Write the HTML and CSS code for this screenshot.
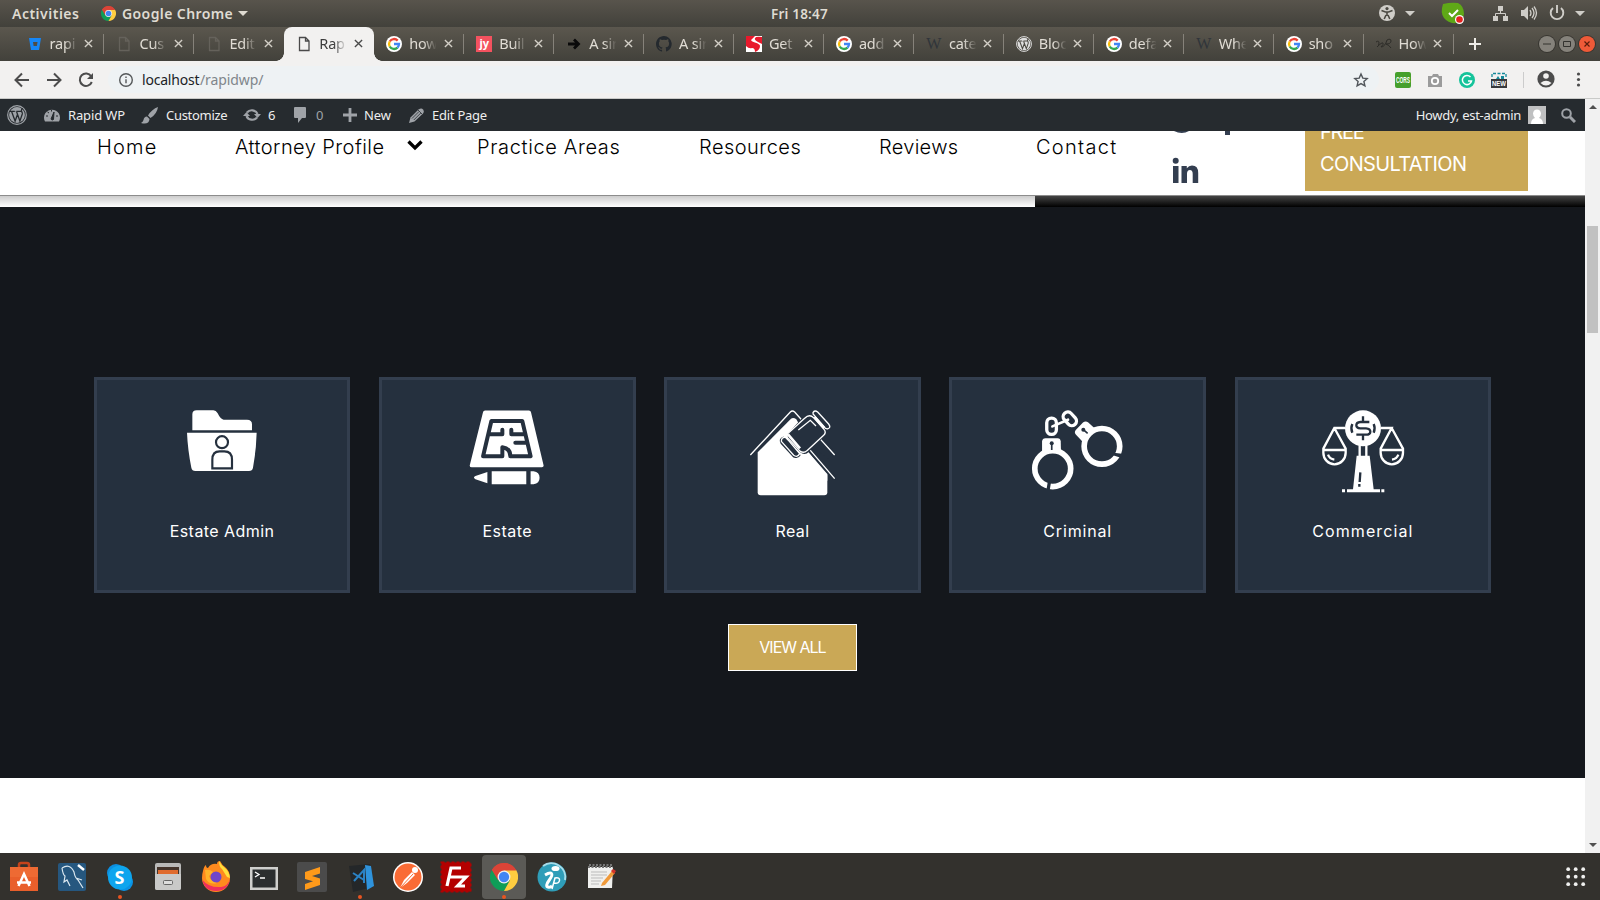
FILE: index.html
```html
<!DOCTYPE html>
<html lang="en">
<head>
<meta charset="utf-8">
<title>Rapid WP</title>
<link rel="stylesheet" href="styles.css">
</head>
<body>
<svg class="defs" width="0" height="0">
  <symbol id="google" viewBox="0 0 16 16"><circle cx="8" cy="8" r="8" fill="#fff"/><g fill="none" stroke-width="2.300"><path d="M11.700 4.600A5 5 0 0 0 3.700 5.500" stroke="#ea4335"/><path d="M3.700 5.500a5 5 0 0 0 0 5" stroke="#fbbc05"/><path d="M3.700 10.500a5 5 0 0 0 7.800 1.100" stroke="#34a853"/><path d="M11.500 11.600A5 5 0 0 0 13 8H8" stroke="#4285f4"/></g></symbol>
  <symbol id="page" viewBox="0 0 16 16"><path d="M3.500 1.500h6l3.500 3.500v9.500H3.500zM9.500 1.500V5H13" fill="none" stroke="currentColor" stroke-width="1.300"/></symbol>
  <symbol id="wordpress" viewBox="0 0 20 20"><circle cx="10" cy="10" r="9.300" fill="none" stroke="currentColor" stroke-width="1.200"/><circle cx="10" cy="10" r="7.900" fill="currentColor"/><path d="M2.500 6.300h5.200M9.300 6.300h5.200M4.600 6.500l3.500 9.500 2.300-6.300M8.300 6.500l-.1.2M9.500 6.500l3.400 9.500 2.400-7c.4-1.400-.9-2.400-.9-3.600 0-1.100.9-1.700 1.600-1.700" fill="none" stroke="var(--wp-ink)" stroke-width="1.300"/></symbol>
  <symbol id="chrome" viewBox="0 0 48 48"><path d="M24 24 3.200 12A24 24 0 0 1 44.800 12z" fill="#db4437"/><path d="M24 24 3.200 12A24 24 0 0 0 24 48l10-18z" fill="#0f9d58"/><path d="M24 24l10 6-10 18A24 24 0 0 0 44.800 12H24z" fill="#ffcd40"/><path d="M3.200 12 14 30l10-17h20.800A24 24 0 0 0 3.200 12z" fill="#db4437"/><circle cx="24" cy="24" r="11" fill="#f1f1f1"/><circle cx="24" cy="24" r="8.800" fill="#4285f4"/></symbol>
  <symbol id="close" viewBox="0 0 10 10"><path d="M1 1l8 8M9 1l-8 8" stroke="currentColor" stroke-width="1.500"/></symbol>
</svg>

<header class="topbar">
  <span class="activities">Activities</span>
  <svg class="i15"><use href="#chrome"/></svg>
  <span class="appname">Google Chrome</span>
  <i class="tri"></i>
  <span class="clock">Fri 18:47</span>
  <svg class="tray" width="220" height="27" viewBox="1375 0 220 27" fill="#cfcdc8">
    <circle cx="1387" cy="13" r="8"/><g stroke="#4b4942" stroke-width="1.600" fill="none"><path d="M1381.500 10.500l4 1.500h3l4-1.500M1387 12v4M1386 15l-1.800 4M1388 15l1.800 4"/></g><circle cx="1387" cy="8.600" r="1.600" fill="#4b4942"/>
    <path d="M1405 11h10l-5 5zM1575 11h10l-5 5z"/>
    <path d="M1443 4q-3 9 1 14 5 6 12 5 7-2 8-9 0-8-6-11-7-1-15 1z" fill="#5fa817"/><path d="M1449 13l3 3 6-6" stroke="#fff" stroke-width="2" fill="none"/><circle cx="1459.500" cy="19.500" r="4.500" fill="#fff"/><circle cx="1459.500" cy="19.500" r="3.300" fill="#e52320"/>
    <path d="M1498 6h5v5h-5zM1493 16h5v5h-5zM1503 16h5v5h-5z"/><path d="M1500.500 10v3.500M1495.500 17v-3.500h10v3.500" stroke="#cfcdc8" fill="none"/>
    <path d="M1521 10h3l4-4v14l-4-4h-3z"/><path d="M1530 10q2 3 0 6M1532 8q4 5 0 10M1534 6.500q5 6.500 0 13" stroke="#cfcdc8" stroke-width="1.300" fill="none"/>
    <path d="M1553 8a6.300 6.300 0 1 0 8 0M1557 5v8" stroke="#cfcdc8" stroke-width="1.900" fill="none"/>
  </svg>
</header>

<nav class="tabs">
  <div class="tab"><svg viewBox="0 0 16 16"><path d="M2 2h12l-2 12H4z" fill="#1687f8"/><path d="M6 6h4.500l-.6 4H6.600z" fill="#4f4d46"/></svg><span>rapi</span><svg class="x"><use href="#close"/></svg></div>
  <div class="tab dim"><svg><use href="#page"/></svg><span>Cus</span><svg class="x"><use href="#close"/></svg></div>
  <div class="tab dim"><svg><use href="#page"/></svg><span>Edit</span><svg class="x"><use href="#close"/></svg></div>
  <div class="tab active"><svg><use href="#page"/></svg><span>Rap</span><svg class="x"><use href="#close"/></svg></div>
  <div class="tab"><svg><use href="#google"/></svg><span>how</span><svg class="x"><use href="#close"/></svg></div>
  <div class="tab"><b class="jy">jy</b><span>Buil</span><svg class="x"><use href="#close"/></svg></div>
  <div class="tab"><svg viewBox="0 0 16 16"><path d="M2 8h10M8 3.500L12.500 8 8 12.500" fill="none" stroke="#0a0a0a" stroke-width="2.800"/></svg><span>A sir</span><svg class="x"><use href="#close"/></svg></div>
  <div class="tab"><svg viewBox="0 0 16 16"><path fill="#24292e" d="M8 0C3.580 0 0 3.580 0 8c0 3.540 2.290 6.530 5.470 7.590.4.070.55-.17.55-.38v-1.490c-2.230.48-2.690-1.070-2.690-1.070-.36-.92-.89-1.170-.89-1.170-.73-.5.050-.49.050-.49.810.06 1.230.83 1.230.83.71 1.230 1.870.87 2.330.66.070-.52.28-.87.500-1.070-1.780-.2-3.640-.89-3.640-3.950 0-.87.310-1.590.82-2.150-.08-.2-.36-1.020.08-2.120 0 0 .67-.21 2.200.82a7.600 7.600 0 0 1 4 0c1.530-1.040 2.200-.82 2.200-.82.44 1.100.16 1.920.08 2.120.51.56.82 1.270.82 2.150 0 3.070-1.870 3.750-3.650 3.950.29.250.54.73.54 1.480v2.200c0 .21.150.46.550.38A8 8 0 0 0 8 0z"/></svg><span>A sir</span><svg class="x"><use href="#close"/></svg></div>
  <div class="tab"><svg viewBox="0 0 16 16"><path d="M0 0h16v16H0z" fill="#e8192c"/><path d="M16 0v16H9q5-2 5-6 0-2-5-3.500T5.500 3.500 9 0zM0 10q3 3 6 2 3 0 3 4H0z" fill="#fff"/><path d="M16 1q-6-1-7 1t3 4l4 2z" fill="#e8192c"/></svg><span>Get</span><svg class="x"><use href="#close"/></svg></div>
  <div class="tab"><svg><use href="#google"/></svg><span>add</span><svg class="x"><use href="#close"/></svg></div>
  <div class="tab"><b class="w">W</b><span>cate</span><svg class="x"><use href="#close"/></svg></div>
  <div class="tab wpt"><svg><use href="#wordpress"/></svg><span>Bloc</span><svg class="x"><use href="#close"/></svg></div>
  <div class="tab"><svg><use href="#google"/></svg><span>defa</span><svg class="x"><use href="#close"/></svg></div>
  <div class="tab"><b class="w">W</b><span>Whe</span><svg class="x"><use href="#close"/></svg></div>
  <div class="tab"><svg><use href="#google"/></svg><span>sho</span><svg class="x"><use href="#close"/></svg></div>
  <div class="tab"><svg viewBox="0 0 16 16"><path d="M0 6q3-2 3 1t-2 4q5-5 6-4t-2 4q4 0 6-7 4-2 4 1t-5 3q3 1 5 4" fill="none" stroke="#2d2c28"/></svg><span>How</span><svg class="x"><use href="#close"/></svg></div>
  <svg class="plus" viewBox="0 0 12 12"><path d="M6 0v12M0 6h12" stroke="#eeece7" stroke-width="2"/></svg>
  <div class="winbtns"><svg viewBox="0 0 16 16"><path d="M4 8h8" stroke="#33322e"/></svg><svg viewBox="0 0 16 16"><path d="M4.500 5.500h7v5h-7z" fill="none" stroke="#33322e"/></svg><svg class="red" viewBox="0 0 16 16"><path d="M5.500 5.500l5 5M10.500 5.500l-5 5" stroke="#5a1d0c" stroke-width="1.200"/></svg></div>
</nav>

<div class="toolbar">
  <svg class="arrows" width="94" height="20" viewBox="10 69 94 20" fill="none" stroke="#4c4c4c" stroke-width="2"><path d="M29 79H16M22 72.500L15.500 79l6.500 6.500M47 79h13M54 72.500l6.500 6.500-6.500 6.500M91.200 75.200a6.200 6.200 0 1 0 .6 5.800"/><path d="M93 72v6h-6z" fill="#4c4c4c" stroke="none"/></svg>
  <div class="address">
    <svg width="16" height="16" viewBox="0 0 16 16" fill="none" stroke="#55585a" stroke-width="1.400"><circle cx="8" cy="8" r="6.300"/><path d="M8 7.200v4M8 4.500v1.500"/></svg>
    <span class="host">localhost</span><span class="path">/rapidwp/</span>
    <svg class="star" width="16" height="16" viewBox="0 0 16 16"><path d="M8 2l1.800 4.100 4.400.4-3.300 3 1 4.400L8 11.600l-3.900 2.300 1-4.400-3.300-3 4.400-.4z" fill="none" stroke="#50555a" stroke-width="1.400"/></svg>
  </div>
  <svg class="ext" width="200" height="26" viewBox="1390 67 200 26">
    <rect x="1395" y="72" width="16" height="16" rx="2" fill="#46a02c"/><text x="1396" y="83" textLength="14" lengthAdjust="spacingAndGlyphs" class="cors">CORS</text>
    <path d="M1428 76h4l1-2h5l1 2h3v11h-14z" fill="#9b9b9b"/><circle cx="1435" cy="81" r="3.200" fill="none" stroke="#fff" stroke-width="1.800"/>
    <circle cx="1467" cy="80" r="8" fill="#15c39a"/><path d="M1470.500 77a4.600 4.600 0 1 0 1 4h-3.500" fill="none" stroke="#fff" stroke-width="1.500"/>
    <path d="M1492 77v-3.500h14V77" fill="none" stroke="#14899a" stroke-width="1.300" stroke-dasharray="3 1.500"/><path d="M1496 79l2-3 2 3zM1501 76h3v3h-3z" fill="#14899a"/><rect x="1491" y="79" width="16" height="9" fill="#37393d"/><text x="1492" y="86.200" textLength="14" lengthAdjust="spacingAndGlyphs" class="newt">NEW</text>
    <path d="M1523.500 72v16" stroke="#ccc"/>
    <circle cx="1546" cy="79" r="8.600" fill="#4c4c4c"/><circle cx="1546" cy="76" r="2.800" fill="#f2f1f0"/><path d="M1540.500 83q5.500-4.500 11 0-5.500 5-11 0z" fill="#f2f1f0"/>
    <g fill="#4c4c4c"><circle cx="1578.500" cy="74" r="1.600"/><circle cx="1578.500" cy="79.500" r="1.600"/><circle cx="1578.500" cy="85" r="1.600"/></g>
  </svg>
</div>

<div class="viewport">
  <main class="site">
    <div class="adminbar">
      <svg class="a-wp"><use href="#wordpress"/></svg>
      <svg class="a-dash" width="16" height="14" viewBox="0 0 16 14"><path d="M1 13.500A8 8 0 1 1 15 13.500z" fill="#9fa3a8"/><path d="M7 11l3-7-.5 7.500a1.500 1.500 0 0 1-2.500-.5zM2 8h2M12 8h2M3.500 4l1.500 1M7.500 2v1.500" fill="#262b2f" stroke="#262b2f"/></svg>
      <span class="t-site">Rapid WP</span>
      <svg class="a-brush" width="17" height="17" viewBox="0 0 17 17" fill="#9fa3a8"><path d="M17 0q-6 2-10 8.500l2.500 2.500Q16 7 17 0zM6 9.500q-3 0-3.500 3.500-.5 2-2.500 3 8 2 8.500-4z"/></svg>
      <span class="t-cust">Customize</span>
      <svg class="a-upd" width="18" height="14" viewBox="0 0 18 14" fill="none" stroke="#9fa3a8" stroke-width="2.200"><path d="M4 4.500a6 5.500 0 0 1 10.500 1.500M14 9.500A6 5.500 0 0 1 3.500 8"/><path d="M11 6h7l-3.500 4zM0 8h7L3.500 4z" fill="#9fa3a8" stroke="none"/></svg>
      <span class="t-six">6</span>
      <svg class="a-com" width="14" height="16" viewBox="0 0 14 16"><path d="M2 0h10q1 0 1 1v9q0 1-1 1H9l-4 5v-5H2q-1 0-1-1V1q0-1 1-1z" fill="#9fa3a8"/></svg>
      <span class="t-zero">0</span>
      <svg class="a-plus" width="14" height="14" viewBox="0 0 14 14"><path d="M7 0v14M0 7h14" stroke="#9fa3a8" stroke-width="2.800"/></svg>
      <span class="t-new">New</span>
      <svg class="a-pen" width="15" height="15" viewBox="0 0 15 15"><path d="M0 15l1.500-5.500 8-8q3-2 4.500 0t0 4l-8.500 8z" fill="#9fa3a8"/><path d="M3 10.500l7-7M4.800 12l7-7M9 2l4 4" stroke="#262b2f" stroke-width=".8"/></svg>
      <span class="t-edit">Edit Page</span>
      <span class="howdy">Howdy, est-admin</span>
      <svg class="avatar" width="18" height="18" viewBox="0 0 18 18"><path d="M0 0h18v18H0z" fill="#bfc0c1"/><path d="M3 18q0-5 4-6-2-2-2-4.500Q5.500 3.500 9 3.500t4 4Q13 10 11 12q4 1 4 6z" fill="#fff"/></svg>
      <svg class="search" width="15" height="15" viewBox="0 0 15 15" fill="none" stroke="#9fa3a8"><circle cx="5.500" cy="5.500" r="4.300" stroke-width="2"/><path d="M9 9l5 5" stroke-width="3"/></svg>
    </div>

    <div class="menu">
      <a class="m-home">Home</a>
      <a class="m-att">Attorney Profile</a>
      <svg class="chev" viewBox="0 0 16 12"><path d="M1.500 2.500L8 9l6.500-6.500" fill="none" stroke="#000" stroke-width="3.300"/></svg>
      <a class="m-prac">Practice Areas</a>
      <a class="m-res">Resources</a>
      <a class="m-rev">Reviews</a>
      <a class="m-con">Contact</a>
      <svg class="social" width="70" height="64" viewBox="1170 131 70 64" fill="#333e50"><path d="M1174 131h15q-7 4-15 0zM1225 131h5v4h-5z"/><circle cx="1175.700" cy="160.700" r="3"/><path d="M1173 166h5.500v17H1173zM1181.500 166h5.300v2.300q2-2.700 5.200-2.700 6.200 0 6.200 7.400v10h-5.500v-9q0-4-2.800-4-2.900 0-2.900 4v9h-5.500z"/></svg>
      <a class="cta"><span class="free">FREE</span><span class="cons">CONSULTATION</span></a>
    </div>
    <div class="edge"></div>

    <section class="practice">
      <div class="cards">
        <article class="card">
          <svg viewBox="51 110 750 280"><path d="M337 180v-48q0-12 13-12h50q8 0 13 9 8 17 18 19h70q15 0 15 14v18zM322 187h208q-1 50-11 105-2 10-12 10H346q-10 0-12-10-11-55-13-105z" fill="#fff"/><g fill="none" stroke="#25303e" stroke-width="6.500"><circle cx="426" cy="215.500" r="18"/><path d="M397 294v-26q0-25 22-25h14q23 0 23 25v26z"/></g></svg>
          <h3 class="c1">Estate Admin</h3>
        </article>
        <article class="card">
          <svg viewBox="36 110 752 280"><path d="M346 120h132q5 0 6 5l38 160q1 6-5 6H306q-7 0-6-6l40-160q1-5 6-5zM353 305v34l-36-12q-9-5 0-10zM366 303h104v39H366zM483 303h9q18 2 18 19.500T492 342h-9z" fill="#fff"/><g fill="none" stroke="#25303e" stroke-width="12" stroke-linejoin="round" stroke-linecap="round"><path d="M365 152h93l25 106h-61q0-24-24-27v27h-58zM360 192h38v-14M465 192h-40v-14M470 217h-33"/></g></svg>
          <h3 class="c2">Estate</h3>
        </article>
        <article class="card">
          <svg viewBox="21 110 750 280"><path d="M293 246L393 145q7-5 16 2l93 163v56q0 9-9 9H302q-9 0-9-9z" fill="#fff"/><path d="M271 254L391 125q6-6 13 0l123 131M446 234l78 91" fill="none" stroke="#25303e" stroke-width="12"/><path d="M420 250l10-40 80 60-8 45-56-68z" fill="#25303e"/><path d="M390 240l50 0 62 71v20H390z" fill="#fff"/><path d="M446 234l78 91" stroke="#25303e" stroke-width="12"/><path d="M271 254L391 125q6-6 13 0l24 27M479 204l45 50M446 234l78 91" fill="none" stroke="#fff" stroke-width="4"/><g stroke="#25303e" stroke-width="10" fill="none"><path d="M386 195l45-50q15-13 26-2l32 35q7 9-1 18l-45 45q-9 10-20 0l-38-36"/><path d="M372 203q-12 4-6 14l37 40q10 4 15-5"/></g><g fill="#25303e" stroke="#fff" stroke-width="4" stroke-linejoin="round"><path d="M386 187l48-43q14-14 27-2l31 35q8 9-1 18l-50 46q-10 10-22 0l-36-38q-5-7 3-16z"/><path d="M376 201q-12-1-12 12l37 42q11 8 18-5l-31-37z"/><path d="M459 127q5-9 14-2l33 36q8 11-2 14-6 2-12-5l-29-35q-5-3-4-8z"/></g><path d="M384 192l36 42M463 140l30 33" stroke="#fff" stroke-width="8"/><path d="M415 179l36-29 17 17" fill="none" stroke="#fff" stroke-width="4"/></svg>
          <h3 class="c3">Real</h3>
        </article>
        <article class="card">
          <svg viewBox="36 110 752 280"><g fill="none" stroke="#fff"><circle cx="339" cy="295" r="54" stroke-width="17"/><circle cx="487" cy="228" r="53.500" stroke-width="17"/><g stroke-width="10"><rect x="321" y="143" width="29" height="49" rx="14"/><rect x="377" y="122" width="28" height="46" rx="14" transform="rotate(-42 391 146)"/></g><path d="M338 168l47-20" stroke-width="8" stroke-linecap="round"/></g><path d="M317 204h37q8 0 9 9l1 34h-57v-34q1-9 10-9z" fill="#fff"/><path d="M430 156q8-6 16 0l18 17-35 41-20-21q-7-8 0-15z" fill="#fff"/><path d="M324 335l-4 24h10l4-24zM522 247l32 4-8 12-26-8z" fill="#25303e"/><circle cx="336" cy="219" r="6" fill="#25303e"/><path d="M336 220v19M431 178l13 11" stroke="#25303e" stroke-width="5"/><circle cx="431" cy="178" r="6" fill="#25303e"/></svg>
          <h3 class="c4">Criminal</h3>
        </article>
        <article class="card">
          <svg viewBox="39 110 750 280"><g fill="none" stroke="#fff" stroke-width="7"><path d="M360 173h-32l-33 62v12a33 34.500 0 0 0 67 0v-12l-34-62M468 173h32l-33 62v12a33 34.500 0 0 0 67 0v-12l-34-62M294 239h69M466 239h69M404 225v35M424 225v35"/><path d="M309 253q5 13 19 15M520 253q-5 13-19 15"/></g><circle cx="414" cy="174" r="54" fill="#fff"/><path d="M395 256h39l12 101h19v9H366v-9h18zM351 357h9v9h-9zM469 357h9v9h-9z" fill="#fff"/><g fill="none" stroke="#25303e" stroke-width="7"><path d="M433 155h-27q-12 1-12 10t12 9h17q13 1 13 10t-13 9h-29M414 138v17M414 193v17M382 161q-6 13 0 26M446 161q6 13 0 26M406 306l-2 29M403 341v8"/></g></svg>
          <h3 class="c5">Commercial</h3>
        </article>
      </div>
      <a class="viewall">VIEW ALL</a>
    </section>
  </main>
  <div class="scrollbar"><i class="up"></i><div class="thumb"></div><i class="down"></i></div>
</div>

<footer class="dock">
  <svg width="620" height="47" viewBox="0 853 620 47">
    <path d="M19 870v-5q0-2 2-2h6q2 0 2 2v5" stroke="#c5431b" stroke-width="2.500" fill="none"/><path d="M10 867h28v24H10z" fill="#ee6a33"/><path d="M10 877h28v14H10z" fill="#e95f2b"/><path d="M18.500 886l5.500-12 5.500 12M17 882.500h14" stroke="#fff" stroke-width="2.500" fill="none"/>
    <rect x="58" y="863" width="28" height="28" rx="2" fill="#26577f"/><path d="M62 868q8-5 12 4 1 6 4 8l5 8M62 868q1 7 3 8l-1 6 3-2 3 6M76 878l6 2" stroke="#dce8f0" stroke-width="1.200" fill="none"/><path d="M78 865l6 5" stroke="#fff" stroke-width="2.500"/>
    <circle cx="116" cy="873" r="9" fill="#0c8fe0"/><circle cx="124" cy="882" r="9" fill="#0a93e5"/><circle cx="120" cy="877.500" r="12" fill="#0ea5ee"/><text x="114.500" y="884" class="skype">S</text><circle cx="120" cy="897" r="2" fill="#e95420"/>
    <rect x="155" y="863" width="26" height="27" rx="2" fill="#b9b9b8"/><path d="M157 867h22v7h-22z" fill="#44332a"/><path d="M158 870h20v4h-20z" fill="#e06b2e"/><path d="M155 874h26v14q0 2-2 2h-22q-2 0-2-2z" fill="#c9c9c8"/><rect x="163.500" y="880.500" width="9" height="4" rx="1" fill="#ddd" stroke="#666"/>
    <path d="M203 871q1-5 3-6 0 3 2 3 3-5 9-4 0-3 3-3 2 4 5 6 5 4 5 11a14 14 0 0 1-28 0q0-4 1-7z" fill="#ff8a1e"/><path d="M202.500 880q2 11 13.500 11 12 0 14-12-2 7-9 8-12 1-18.500-7z" fill="#f0305c"/><path d="M219 861q0 6 3 8l5 8 3 1q-1-7-5-10-4-3-6-7z" fill="#ffe03c"/><circle cx="216" cy="877" r="5.500" fill="#7146c8"/><path d="M205 870q5-1 8 2l-4 4q2 6 8 7-8 2-11-4z" fill="#ffb429"/>
    <rect x="250" y="867" width="28" height="23" fill="#cfcfcd"/><rect x="252.500" y="869.500" width="23" height="18" fill="#2b2e2f"/><path d="M255 872l4 2.500-4 2.500M260 878h5" stroke="#fff" stroke-width="1.300" fill="none"/>
    <rect x="297" y="862" width="30" height="30" rx="2" fill="#4b4b4b"/><path d="M320 867l-15 5v7l8 2.300-8 2.700v6l15-5v-6.500l-8-2.500 8-2.500z" fill="#ff9a1a"/>
    <path d="M349 866l21-2 3 23-20 5z" fill="#242729"/><path d="M353 873l11 7M354 881l10-11v13" stroke="#2a82c5" stroke-width="2" fill="none"/><path d="M365 865l6 1 3 20-7 4z" fill="#2f93dc"/><circle cx="360" cy="897" r="2" fill="#e95420"/>
    <circle cx="408" cy="877" r="15" fill="#fff"/><circle cx="408" cy="877" r="13.500" fill="#fa6b35"/><path d="M400 888l4-8 8-8 3 3-8 8z" fill="#fff"/><circle cx="415" cy="870" r="3" fill="#fff"/><path d="M400 888l13-14" stroke="#fa6b35"/>
    <path d="M441.500 862.500h29v29h-29z" fill="#b40000" stroke="#b40000" stroke-width="2" stroke-dasharray="3 2"/><path d="M447 886l4-18h10M449.500 877h9M458 877h8l-8.500 9h7.500" stroke="#fff" stroke-width="3.200" fill="none"/>
    <rect x="482" y="855" width="44" height="44" rx="4" fill="#5b5a56"/><use href="#chrome" x="490" y="863" width="28" height="28"/><circle cx="504" cy="897" r="2" fill="#e95420"/>
    <circle cx="552" cy="877" r="14.500" fill="#2f9db8"/><path d="M543 866a14 14 0 0 1 22 14" stroke="#a6dcea" stroke-width="2" fill="none"/><ellipse cx="555.500" cy="868.500" rx="4" ry="2.600" fill="#fff"/><path d="M545 875q5-3 6.500-1.500t-2.500 7-1 6.500q1 1 4-1" stroke="#fff" stroke-width="3" fill="none"/><path d="M552 889l3-11q5-1 4.500 2.500t-5.500 2.500" stroke="#fff" stroke-width="1.500" fill="none"/>
    <path d="M588 867h25l-1 21h-24z" fill="#f0f0ee"/><path d="M588 867h25M589 865h24" stroke="#777" stroke-width="2" stroke-dasharray="2 1.500"/><path d="M591 872h16M591 875h16M591 878h12M591 881h10M591 884h8" stroke="#bbb"/><path d="M602 883l10-12 3 2-10 12-4 1z" fill="#f09a3a"/><path d="M611 871l2-2 3 2-2 3z" fill="#d5342a"/>
  </svg>
  <svg class="grid" width="20" height="20" viewBox="0 0 20 20" fill="#f0f0ef"><g id="dots"><circle cx="2.200" cy="2.200" r="1.900"/><circle cx="9.700" cy="2.200" r="1.900"/><circle cx="17.200" cy="2.200" r="1.900"/></g><use href="#dots" y="7.500"/><use href="#dots" y="15"/></svg>
</footer>
</body>
</html>
```

FILE: styles.css
```css
* { box-sizing: border-box; }
body { margin: 0; width: 1600px; height: 900px; overflow: hidden; display: flex; flex-direction: column; font-family: "Noto Sans", "Open Sans", sans-serif; background: #fff; }
svg { display: block; flex: none; }
span, a, h3 { white-space: nowrap; }
.defs { position: absolute; }

/* desktop top bar */
.topbar { height: 27px; flex: none; display: flex; align-items: center; background: linear-gradient(#58544c, #42413b); color: #dfdbd2; font-size: 14px; font-weight: 600; position: relative; padding-left: 12px; }
.activities { width: 89px; letter-spacing: .5px; }
.i15 { width: 15px; height: 15px; }
.appname { margin-left: 6px; width: 111px; letter-spacing: .4px; }
.tri { margin-left: 5px; border: 5px solid transparent; border-top-color: #dfdbd2; border-bottom: 0; }
.clock { margin-left: 523px; font-size: 13.500px; letter-spacing: .2px; }
.tray { position: absolute; left: 1375px; top: 0; }

/* browser tabs */
.tabs { height: 34px; flex: none; display: flex; align-items: center; background: linear-gradient(#5b574e, #42413b); padding-left: 14.500px; position: relative; }
.tab { width: 89.950px; height: 34px; flex: none; display: flex; align-items: center; padding-left: 12px; position: relative; color: #e0dcd4; font-size: 14.500px; }
.tab::after { content: ""; position: absolute; right: 0; top: 7px; width: 1px; height: 20px; background: #86827a; }
.tab > svg, .tab > b { width: 16px; height: 16px; flex: none; }
.tab span { width: 29px; margin-left: 7px; margin-top: -2px; letter-spacing: -.2px; -webkit-mask-image: linear-gradient(90deg, #000 50%, transparent 95%); mask-image: linear-gradient(90deg, #000 50%, transparent 95%); }
.tab > svg.x { width: 9px; height: 9px; margin-left: 5.500px; margin-top: -1px; color: #d3cfc7; }
.tab.dim > svg:first-child { color: #65625b; }
.tab.active { background: #f2f1f0; border-radius: 8px 8px 0 0; color: #3c3c3c; }
.tab.active > svg { color: #4a4a4a; }
.tab.active::before { content: ""; position: absolute; left: -8px; right: -8px; bottom: 0; height: 8px; background: radial-gradient(circle at 0 0, transparent 7.500px, #f2f1f0 8px) left / 8px 8px no-repeat, radial-gradient(circle at 100% 0, transparent 7.500px, #f2f1f0 8px) right / 8px 8px no-repeat; }
.tab.active::after, .tab:nth-child(3)::after { display: none; }
.tab.wpt > svg:first-child { color: #dedede; --wp-ink: #4b4942; }
.jy { background: #f4525f; color: #fff; font-size: 11px; line-height: 14px; text-align: center; }
.w { font: 16px/16px "Liberation Serif", serif; color: #30353a; text-align: center; }
.plus { width: 12px; height: 12px; margin-left: 15.500px; }
.winbtns { display: flex; gap: 4px; margin-left: 57.500px; }
.winbtns svg { width: 16px; height: 16px; border-radius: 50%; background: #85827b; box-shadow: 0 0 0 1px #383631; }
.winbtns .red { background: #ee5a38; }

/* address row */
.toolbar { height: 38px; flex: none; display: flex; align-items: center; background: #f2f1f0; border-bottom: 1px solid #c9cac8; padding-left: 10px; }
.address { margin-left: 4px; width: 1271px; height: 27px; border-radius: 14px; background: #eef2f4; display: flex; align-items: center; padding-left: 10px; font-size: 14px; }
.host { margin-left: 8px; color: #202226; width: 58px; letter-spacing: -.2px; }
.path { color: #80868b; letter-spacing: -.1px; }
.star { margin-left: auto; margin-right: 10px; }
.ext { margin-left: 11px; }
.cors { font: bold 8.500px "Liberation Sans", sans-serif; fill: #fff; }
.newt { font: bold 7.500px "Liberation Sans", sans-serif; fill: #fff; }

/* page */
.viewport { height: 754px; flex: none; display: flex; }
.site { width: 1585px; height: 754px; background: #fff; }
.adminbar { height: 32px; background: #262b2f; color: #eee; display: flex; align-items: center; padding-left: 7px; font-size: 13px; }
.a-wp { width: 20px; height: 20px; color: #9fa3a8; --wp-ink: #262b2f; }
.a-dash { margin-left: 17px; }
.t-site { margin-left: 8px; width: 73px; letter-spacing: -.15px; }
.a-brush { width: 17px; }
.t-cust { margin-left: 8px; width: 77px; letter-spacing: -.3px; }
.t-six { margin-left: 7px; width: 25px; }
.t-zero { margin-left: 9px; width: 27px; color: #9fa3a8; }
.t-new { margin-left: 7px; width: 45px; letter-spacing: -.1px; }
.t-edit { margin-left: 8px; letter-spacing: -.25px; }
.howdy { margin-left: auto; letter-spacing: -.27px; }
.avatar { margin-left: 7px; }
.search { margin: 0 9px 0 15px; }

.menu { height: 65px; overflow: hidden; background: #fff; border-bottom: 1px solid #8c8c8c; display: flex; padding-left: 97px; font: 300 20px/32px Inter, sans-serif; color: #000; }
.menu a { flex: none; }
.m-home { width: 138px; letter-spacing: 1.200px; }
.m-att { width: 172px; letter-spacing: .43px; }
.chev { width: 16px; height: 12px; margin: 8px 54px 0 0; }
.m-prac { width: 222px; letter-spacing: .65px; }
.m-res { width: 180px; letter-spacing: .48px; }
.m-rev { width: 157px; letter-spacing: .3px; }
.m-con { width: 134px; letter-spacing: 1.300px; }
.menu .cta { margin-left: 65px; width: 223px; height: 60px; background: #caa856; color: #fff; font-weight: 400; display: flex; flex-direction: column; justify-content: flex-end; padding: 0 0 11.500px 15px; letter-spacing: -.63px; }
.cta .free { letter-spacing: -1.300px; }
.edge { height: 11px; background: linear-gradient(rgba(0,0,0,.2), rgba(0,0,0,0)), #fff; display: flex; justify-content: flex-end; }
.edge::after { content: ""; width: 550px; height: 11px; background: linear-gradient(#444, #000); }

.practice { height: 571px; background: #14171c; padding: 170px 93.800px 0; display: flex; flex-direction: column; align-items: center; }
.cards { width: 1397.400px; height: 216px; display: grid; grid-template-columns: repeat(5, 1fr); gap: 28.600px; }
.card { background: #25303e; border: 3px solid #333e4e; padding-top: 26.700px; overflow: hidden; }
.card svg { width: 250px; height: 93.300px; }
.card h3 { margin: 17px 0 0; text-align: center; font: 400 16px/28px Inter, sans-serif; color: #fff; }
.card .c1 { letter-spacing: .45px; }
.card .c2 { letter-spacing: .5px; }
.card .c3 { letter-spacing: .4px; }
.card .c4 { letter-spacing: .85px; }
.card .c5 { letter-spacing: 1.100px; }
.viewall { margin-top: 31px; width: 129px; height: 47px; border: 1px solid #fff; background: #caa856; color: #fff; font: 400 16px/45px Inter, sans-serif; letter-spacing: -1px; text-align: center; }

.scrollbar { width: 15px; background: #f1f1f1; display: flex; flex-direction: column; align-items: center; padding: 6px 0; }
.up { border: 4px solid transparent; border-bottom-color: #505050; border-top: 0; }
.down { border: 4px solid transparent; border-top-color: #505050; border-bottom: 0; margin-top: auto; }
.thumb { width: 11px; height: 107px; background: #c1c1c1; margin-top: 117px; }

.dock { height: 47px; flex: none; background: #33312d; display: flex; align-items: center; }
.grid { margin-left: auto; margin-right: 14px; }
.skype { font: bold 18px "Open Sans", sans-serif; fill: #fff; }
```
